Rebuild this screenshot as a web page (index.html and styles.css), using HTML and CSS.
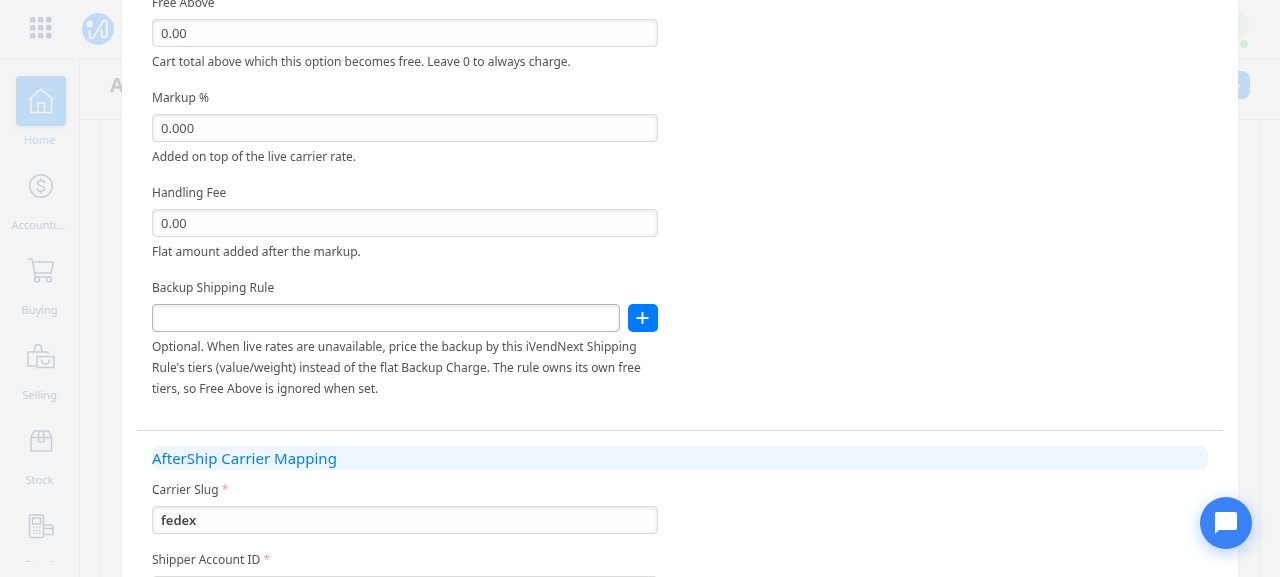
FILE: index.html
```html
<!DOCTYPE html>
<html lang="en">
<head>
    <meta charset="UTF-8">
    <meta name="viewport" content="width=device-width, initial-scale=1.0">
    <title>AfterShip Carrier Mapping</title>
    <link rel="stylesheet" href="styles.css">
</head>
<body>
    <div class="app">
        <header class="navbar">
            <button type="button" class="apps-btn" aria-label="Apps">
                <svg width="22" height="22" viewBox="0 0 22 22" fill="currentColor">
                    <rect x="0" y="0" width="5.500" height="5.500" rx="1.5"/><rect x="8" y="0" width="5.500" height="5.500" rx="1.5"/><rect x="16" y="0" width="5.500" height="5.500" rx="1.5"/>
                    <rect x="0" y="8" width="5.500" height="5.500" rx="1.5"/><rect x="8" y="8" width="5.500" height="5.500" rx="1.5"/><rect x="16" y="8" width="5.500" height="5.500" rx="1.5"/>
                    <rect x="0" y="16" width="5.500" height="5.500" rx="1.5"/><rect x="8" y="16" width="5.500" height="5.500" rx="1.5"/><rect x="16" y="16" width="5.500" height="5.500" rx="1.5"/>
                </svg>
            </button>
            <a href="#" class="logo" aria-label="iVendNext">
                <svg width="32" height="32" viewBox="0 0 32 32" fill="none">
                    <circle cx="16" cy="16" r="16" fill="#c1dbf5"/>
                    <circle cx="7.7" cy="11" r="3.2" fill="#f4f4f4"/>
                    <path d="M7.5 17.5V22c0 3.5 3 4 4.700 1.500L21 8.500c1.200-2 3.700-1.500 3.700 1V22c0 3-5 3-5 0v-5" stroke="#f4f4f4" stroke-width="2" stroke-linecap="round" stroke-linejoin="round"/>
                </svg>
            </a>
            <div class="avatar"><span class="status"></span></div>
        </header>
        <div class="main">
            <nav class="sidebar">
                <a href="#" class="nav-item active">
                    <span class="nav-icon">
                        <svg width="28" height="28" viewBox="0 0 28 28"><path d="M1.500 13L14 2l12.500 11M4 11v14.500h20.500V11M11 25.500V16h6.500v9.500"/></svg>
                    </span>
                    <span class="nav-label">Home</span>
                </a>
                <a href="#" class="nav-item">
                    <span class="nav-icon">
                        <svg width="28" height="28" viewBox="0 0 28 28"><circle cx="14" cy="14" r="11.300"/><path d="M17.500 11c0-3.300-7-3.300-7 0 0 3.500 7.200 2.300 7.200 5.800 0 3.200-7.500 3.200-7.500-.3M14 6.500V9M14 19v2.500"/></svg>
                    </span>
                    <span class="nav-label">Accounting</span>
                </a>
                <a href="#" class="nav-item">
                    <span class="nav-icon">
                        <svg width="28" height="28" viewBox="0 0 28 28"><path d="M.5 2H5l3.500 18H24M5.800 5H26.500l-2.500 11H8M8.500 20l-.5 2"/><circle cx="10" cy="22.500" r="2.500"/><circle cx="22" cy="22.500" r="2.500"/></svg>
                    </span>
                    <span class="nav-label">Buying</span>
                </a>
                <a href="#" class="nav-item">
                    <span class="nav-icon">
                        <svg width="28" height="28" viewBox="0 0 28 28"><path d="M7.500 10V6.500c0-5 7-5 7 0V10M21 12V10H1v14h7.500M10 14.500h17V25.500H10zM14.500 17.500c0 6 8 6 8 0"/></svg>
                    </span>
                    <span class="nav-label">Selling</span>
                </a>
                <a href="#" class="nav-item">
                    <span class="nav-icon">
                        <svg width="28" height="28" viewBox="0 0 28 28"><path d="M4 10.500L7 4h14.500l3 6.500V24H4zM4 10.500h20.500M11.500 15V7L13 4M17 15V7l-1.500-3M11.500 15H17"/></svg>
                    </span>
                    <span class="nav-label">Stock</span>
                </a>
                <a href="#" class="nav-item">
                    <span class="nav-icon">
                        <svg width="28" height="28" viewBox="0 0 28 28"><rect x="2.500" y="3" width="14" height="22.500" rx="1"/><path d="M5.500 6h8v6h-8zM16.500 13H24l2 1.500v8H16.500M16.500 16.500H26"/><path d="M6 15.500h8M6 18.500h8M6 21.500h8" stroke-dasharray="1.500 1.500"/></svg>
                    </span>
                    <span class="nav-label">Retail</span>
                </a>
            </nav>
            <div class="page">
                <div class="page-head">
                    <h1>A</h1>
                    <button type="button" class="save-btn">Save</button>
                </div>
                <div class="page-body"><div class="page-card"></div></div>
            </div>
        </div>
    </div>

    <div class="modal">
        <form class="modal-body">
            <section class="section">
                <div class="column">
                    <div class="field">
                        <label for="free_above">Free Above</label>
                        <input type="text" id="free_above" value="0.00">
                        <p class="help">Cart total above which this option becomes free. Leave 0 to always charge.</p>
                    </div>
                    <div class="field">
                        <label for="markup">Markup %</label>
                        <input type="text" id="markup" value="0.000">
                        <p class="help">Added on top of the live carrier rate.</p>
                    </div>
                    <div class="field">
                        <label for="handling_fee">Handling Fee</label>
                        <input type="text" id="handling_fee" value="0.00">
                        <p class="help">Flat amount added after the markup.</p>
                    </div>
                    <div class="field">
                        <label for="backup_rule">Backup Shipping Rule</label>
                        <div class="link-field">
                            <input type="text" id="backup_rule" class="link-input">
                            <button type="button" class="add-btn" aria-label="Add">
                                <svg width="14" height="14" viewBox="0 0 14 14"><path d="M6.500 1v12M.5 7h12" stroke="#fff" stroke-width="1.800"/></svg>
                            </button>
                        </div>
                        <p class="help">Optional. When live rates are unavailable, price the backup by this iVendNext Shipping Rule's tiers (value/weight) instead of the flat Backup Charge. The rule owns its own free tiers, so Free Above is ignored when set.</p>
                    </div>
                </div>
            </section>
            <section class="section">
                <h2 class="section-head">AfterShip Carrier Mapping</h2>
                <div class="column">
                    <div class="field">
                        <label for="carrier_slug">Carrier Slug <span class="req">*</span></label>
                        <input type="text" id="carrier_slug" class="bold" value="fedex">
                    </div>
                    <div class="field">
                        <label for="account_id">Shipper Account ID <span class="req">*</span></label>
                        <input type="text" id="account_id" class="bold">
                    </div>
                </div>
            </section>
        </form>
    </div>

    <button type="button" class="chat-btn" aria-label="Chat">
        <svg width="22" height="22" viewBox="0 0 22 22"><path d="M2 0h18a2 2 0 0 1 2 2v14a2 2 0 0 1-2 2H4l-4 4V2a2 2 0 0 1 2-2z" fill="#fff"/></svg>
    </button>
</body>
</html>
```
FILE: styles.css
```css
* { box-sizing: border-box; }
body { margin: 0; height: 100vh; overflow: hidden; background: #f4f4f4; color: #505255; font-family: "Noto Sans", sans-serif; font-size: 12px; }
button { border: none; padding: 0; cursor: pointer; font-family: inherit; }
a { text-decoration: none; }
svg { display: block; }

/* page behind the dialog */
.app { display: flex; flex-direction: column; height: 100vh; }
.navbar { display: flex; align-items: center; height: 60px; padding: 0 31px 2px 30px; border-bottom: 1px solid #ebebeb; flex-shrink: 0; }
.apps-btn { background: none; color: #c3d0dc; margin: 0 30px 2px 0; }
.avatar { position: relative; width: 38px; height: 28px; border-radius: 14px; background: #ebf2ee; margin-left: auto; margin-bottom: 8px; }
.status { position: absolute; right: 1px; bottom: -9px; width: 8px; height: 8px; border-radius: 50%; background: #cdeedd; }
.main { display: flex; flex: 1; min-height: 0; }
.sidebar { width: 80px; padding-top: 16px; border-right: 1px solid #ebebeb; overflow: hidden; flex-shrink: 0; }
.nav-item { display: flex; flex-direction: column; align-items: center; height: 85px; color: #c3d0dc; }
.nav-item:last-child { height: 61px; overflow: hidden; }
.nav-icon { display: flex; align-items: center; justify-content: center; width: 50px; height: 50px; border-radius: 4px; margin-left: 2px; flex-shrink: 0; }
.nav-icon svg { fill: none; stroke: currentColor; stroke-width: 1.5; }
.nav-label { width: 56px; margin-top: 6px; line-height: 16px; font-size: 11px; text-align: center; white-space: nowrap; overflow: hidden; text-overflow: ellipsis; flex-shrink: 0; }
.active { color: #c1dbf5; }
.active .nav-icon { background: #c1dbf5; color: #f4f4f4; box-shadow: 0 2px 6px #e8e8e8; }
.page { display: flex; flex-direction: column; flex: 1; }
.page-head { display: flex; align-items: center; justify-content: space-between; height: 60px; padding: 0 30px 10px; border-bottom: 1px solid #ebebeb; }
.page-head h1 { margin: 0; font-size: 20px; color: #cacaca; }
.save-btn { height: 28px; padding: 0 10px; border-radius: 8px; background: #c1dbf5; color: #f4f4f4; font-size: 13px; }
.page-body { flex: 1; display: flex; padding: 0 20px; }
.page-card { flex: 1; border: solid #ebebeb; border-width: 0 1px; }

/* dialog, scrolled down */
.modal { position: fixed; top: 0; bottom: 0; left: 122px; right: 42px; background: #fff; overflow: hidden; box-shadow: 0 0 1px #ccc; }
.modal-body { padding: 0 15px; margin-top: -21px; }
.section { padding: 15px 15px 14px; }
.section + .section { border-top: 1px solid #d9d9d9; }
.column { width: calc(50% - 22px); }
.field { margin-bottom: 17px; }
.field label { display: block; line-height: 18px; margin-bottom: 7px; }
.field input { display: block; width: 100%; height: 28px; padding: 0 8px; border: 1px solid #dcdcdc; border-radius: 4px; background: #fefefe; box-shadow: inset 0 1px 4px #e2e2e2; font-family: inherit; font-size: 13px; color: #505560; }
.field .link-input { border-color: #b5b5b5; background: #fff; }
.field .bold { font-weight: 600; color: #444a50; }
.help { margin: 4px 0 0; line-height: 21px; }
.link-field { display: flex; gap: 8px; }
.add-btn { display: flex; align-items: center; justify-content: center; width: 30px; height: 28px; border-radius: 5px; background: #007bff; flex-shrink: 0; }
.section-head { margin: 0 0 11px; height: 24px; line-height: 24px; border-radius: 8px; background: #edf5fd; color: #0b7fdd; font-size: 15px; font-weight: 400; }
.req { color: #f49a9a; }

.chat-btn { position: fixed; right: 28px; bottom: 28px; display: flex; align-items: center; justify-content: center; width: 52px; height: 52px; border-radius: 50%; background: #3b82f6; box-shadow: 0 4px 16px rgba(59, 130, 246, 0.4); }
```
